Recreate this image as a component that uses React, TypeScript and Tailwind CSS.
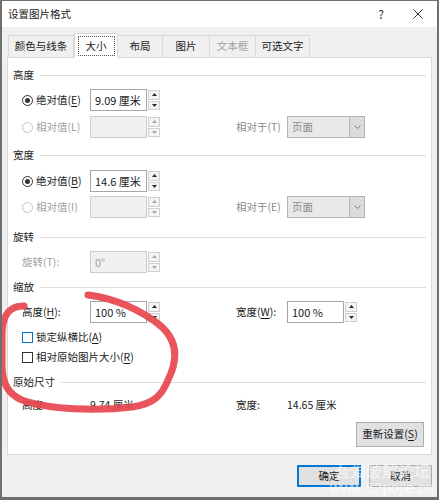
import React from "react";

const U = ({ children }: { children: React.ReactNode }) => (
  <span className="underline underline-offset-2">{children}</span>
);

const Spin = ({ disabled }: { disabled?: boolean }) => {
  const c = disabled ? "#a8a8a8" : "#2a2a2a";
  return (
    <div className="flex flex-col w-[13px] h-full gap-[1px] pl-[1px] py-[1px]">
      <div className="flex-1 flex items-center justify-center border border-[#cfcfcf] bg-[#f4f4f4]">
        <svg width="5" height="3" viewBox="0 0 5 3">
          <path d="M0 3 L2.5 0 L5 3Z" fill={c} />
        </svg>
      </div>
      <div className="flex-1 flex items-center justify-center border border-[#cfcfcf] bg-[#f4f4f4]">
        <svg width="5" height="3" viewBox="0 0 5 3">
          <path d="M0 0 L2.5 3 L5 0Z" fill={c} />
        </svg>
      </div>
    </div>
  );
};

const Input = ({
  value,
  disabled,
  w = "w-[70px]",
}: {
  value?: string;
  disabled?: boolean;
  w?: string;
}) => (
  <div className={`flex h-[22px] ${w}`}>
    <div
      className={`flex-1 flex items-center pl-[4px] border ${
        disabled
          ? "bg-[#f0f0f0] border-[#cccccc] text-[#a0a0a0]"
          : "bg-white border-[#a6a6a6] text-[#1a1a1a]"
      } text-[11px]`}
    >
      {value}
    </div>
    <Spin disabled={disabled} />
  </div>
);

const Select = () => (
  <div className="flex h-[22px] w-[78px] border border-[#b4b4b4] bg-[#e9e9e9]">
    <div className="flex-1 flex items-center pl-[4px] text-[#8a8a8a]">页面</div>
    <div className="w-[15px] flex items-center justify-center bg-[#dcdcdc] border-l border-[#b4b4b4]">
      <svg width="7" height="4" viewBox="0 0 7 4">
        <path d="M0.5 0.5 L3.5 3.5 L6.5 0.5" fill="none" stroke="#7a7a7a" strokeWidth="1" />
      </svg>
    </div>
  </div>
);

const Radio = ({ checked, disabled }: { checked?: boolean; disabled?: boolean }) => (
  <div
    className={`w-[11px] h-[11px] rounded-full border flex items-center justify-center bg-white ${
      disabled ? "border-[#c4c4c4]" : "border-[#333333]"
    }`}
  >
    {checked && <div className="w-[5px] h-[5px] rounded-full bg-[#333333]" />}
  </div>
);

const Header = ({ text, mt }: { text: string; mt: string }) => (
  <div className={`flex items-center h-[16px] ${mt}`}>
    <span>{text}</span>
    <div className="flex-1 h-px bg-[#dedede] ml-[6px]" />
  </div>
);

export default function App() {
  return (
    <div className="relative w-[439px] h-[500px] overflow-hidden bg-[#f0f0f0] border-l-2 border-r-2 border-t border-b-[3px] border-[#6f6f6f] font-[Noto_Sans_CJK_SC,sans-serif] text-[10.5px] text-[#1a1a1a] leading-none flex flex-col">
      {/* title bar */}
      <div className="h-[26px] bg-white flex items-center pl-[6px] shrink-0">
        <span className="text-[10.5px]">设置图片格式</span>
        <div className="ml-auto flex items-center pr-[9px]">
          <div className="w-[20px] flex justify-center text-[12px] text-[#333]">?</div>
          <div className="w-[20px] ml-[17px] flex justify-center">
            <svg width="10" height="10" viewBox="0 0 10 10">
              <path d="M0.5 0.5 L9.5 9.5 M9.5 0.5 L0.5 9.5" stroke="#333" strokeWidth="1" />
            </svg>
          </div>
        </div>
      </div>

      {/* tabs */}
      <div className="mt-[8px] h-[22px] flex items-end pl-[6px] shrink-0">
        <div className="w-[66px] h-[22px] flex items-center justify-center border border-b-0 border-[#d9d9d9]">
          颜色与线条
        </div>
        <div className="relative z-10 w-[44px] h-[25px] -mb-px flex items-center justify-center bg-white border border-b-0 border-[#d9d9d9]">
          <div className="px-[7px] py-[4px] border border-dotted border-[#555]">大小</div>
        </div>
        <div className="w-[45px] h-[22px] flex items-center justify-center border border-b-0 border-l-0 border-[#d9d9d9]">
          布局
        </div>
        <div className="w-[47px] h-[22px] flex items-center justify-center border border-b-0 border-l-0 border-[#d9d9d9]">
          图片
        </div>
        <div className="w-[46px] h-[22px] flex items-center justify-center border border-b-0 border-l-0 border-[#d9d9d9] text-[#a0a0a0]">
          文本框
        </div>
        <div className="w-[54px] h-[22px] flex items-center justify-center border border-b-0 border-l-0 border-[#d9d9d9]">
          可选文字
        </div>
      </div>

      {/* panel */}
      <div className="mx-[5px] h-[398px] border border-[#d9d9d9] bg-white flex flex-col px-[5px] shrink-0">
        <Header text="高度" mt="mt-[9px]" />
        <div className="flex items-center h-[22px] mt-[6px]">
          <div className="w-[77px] flex items-center pl-[9px] gap-[3px]">
            <Radio checked />
            <span>
              绝对值(<U>E</U>)
            </span>
          </div>
          <Input value="9.09 厘米" />
        </div>
        <div className="flex items-center h-[22px] mt-[5px]">
          <div className="w-[77px] flex items-center pl-[9px] gap-[3px] text-[#a0a0a0]">
            <Radio disabled />
            <span>相对值(L)</span>
          </div>
          <Input disabled />
          <div className="w-[76px]" />
          <div className="w-[51px] text-[#8a8a8a]">相对于(T)</div>
          <Select />
        </div>

        <Header text="宽度" mt="mt-[9px]" />
        <div className="flex items-center h-[22px] mt-[7px]">
          <div className="w-[77px] flex items-center pl-[9px] gap-[3px]">
            <Radio checked />
            <span>
              绝对值(<U>B</U>)
            </span>
          </div>
          <Input value="14.6 厘米" />
        </div>
        <div className="flex items-center h-[22px] mt-[4px]">
          <div className="w-[77px] flex items-center pl-[9px] gap-[3px] text-[#a0a0a0]">
            <Radio disabled />
            <span>相对值(I)</span>
          </div>
          <Input disabled />
          <div className="w-[76px]" />
          <div className="w-[51px] text-[#8a8a8a]">相对于(E)</div>
          <Select />
        </div>

        <Header text="旋转" mt="mt-[11px]" />
        <div className="flex items-center h-[22px] mt-[6px]">
          <div className="w-[77px] pl-[9px] text-[#a0a0a0]">旋转(T):</div>
          <Input value="0°" disabled />
        </div>

        <Header text="缩放" mt="mt-[6px]" />
        <div className="flex items-center h-[22px] mt-[6px]">
          <div className="w-[77px] pl-[9px]">
            高度(<U>H</U>):
          </div>
          <Input value="100 %" />
          <div className="w-[76px]" />
          <div className="w-[51px]">
            宽度(<U>W</U>):
          </div>
          <Input value="100 %" />
        </div>
        <div className="flex items-center h-[16px] mt-[6px] pl-[9px] gap-[3px]">
          <div className="w-[11px] h-[11px] border border-[#0078d7] bg-white" />
          <span>
            锁定纵横比(<U>A</U>)
          </span>
        </div>
        <div className="flex items-center h-[16px] mt-[4px] pl-[9px] gap-[3px]">
          <div className="w-[11px] h-[11px] border border-[#333] bg-white" />
          <span>
            相对原始图片大小(<U>R</U>)
          </span>
        </div>

        <Header text="原始尺寸" mt="mt-[9px]" />
        <div className="flex items-center h-[16px] mt-[7px]">
          <div className="w-[77px] pl-[9px]">高度:</div>
          <div className="w-[146px]">9.74 厘米</div>
          <div className="w-[51px]">宽度:</div>
          <div>14.65 厘米</div>
        </div>
        <div className="flex mt-[9px]">
          <div className="ml-auto mr-[2px] w-[68px] h-[25px] flex items-center justify-center bg-[#e1e1e1] border border-[#adadad]">
            重新设置(<U>S</U>)
          </div>
        </div>
      </div>

      {/* bottom buttons */}
      <div className="flex justify-end gap-[8px] pr-[5px] mt-[10px]">
        <div className="w-[64px] h-[22px] flex items-center justify-center bg-[#e1e1e1] border-2 border-[#0078d7]">
          确定
        </div>
        <div className="w-[63px] h-[22px] flex items-center justify-center bg-[#e1e1e1] border border-[#adadad]">
          取消
        </div>
      </div>

      {/* red hand-drawn annotation */}
      <svg
        className="absolute left-0 top-0 pointer-events-none"
        width="439"
        height="500"
        viewBox="-2 -1 439 500"
      >
        <path
          d="M84 293 C110 296 138 308 158 325 C176 342 172 362 164 378 C158 393 150 402 128 405 C95 409 45 408 18 398 C4 392 -1 382 -2 365 L-2 330 C-1 312 6 304 20 304"
          fill="none"
          stroke="#e8464f"
          strokeWidth="7"
          strokeLinecap="round"
          strokeLinejoin="round"
          opacity="0.92"
        />
      </svg>

      {/* watermark */}
      <div className="absolute left-[328px] top-[461px] w-[104px] flex flex-col items-center pointer-events-none text-white/65">
        <span className="text-[16px] leading-[17px]">吾爱破解论坛</span>
        <span className="text-[15px] leading-[17px] font-[Liberation_Sans,sans-serif]">www.52pojie.cn</span>
      </div>
    </div>
  );
}
